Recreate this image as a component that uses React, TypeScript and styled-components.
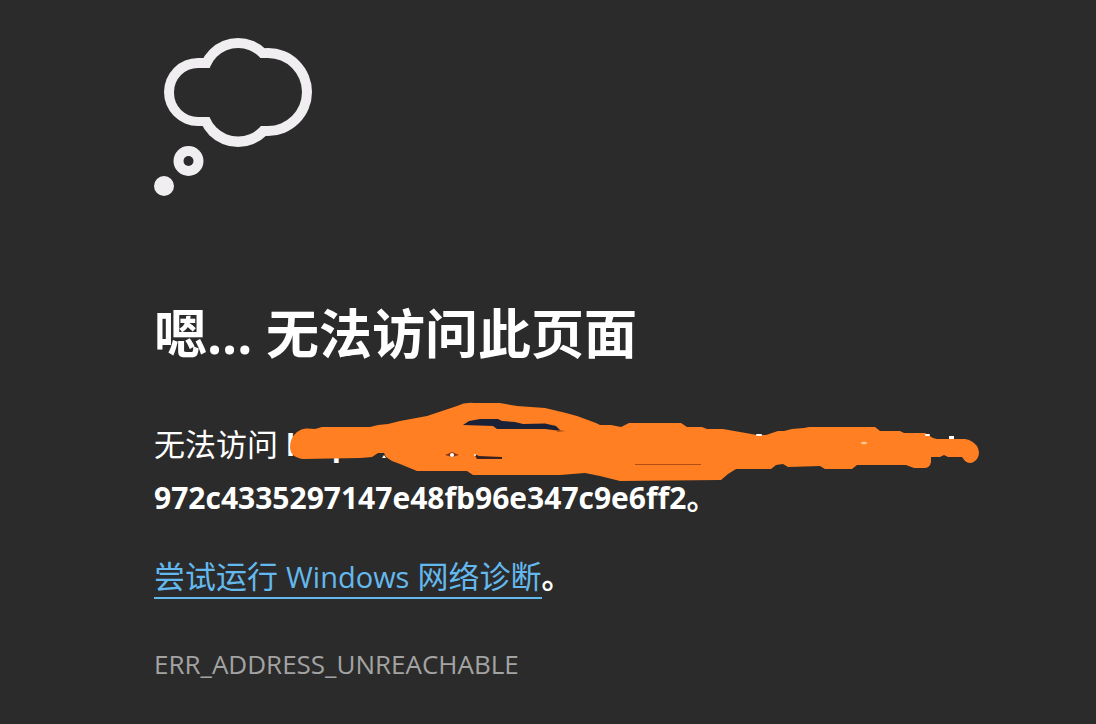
import React from "react";
import styled, { createGlobalStyle } from "styled-components";

const color = {
  page: "#2b2b2b",
  icon: "#f0eef0",
  text: "#ffffff",
  link: "#63b9ee",
  code: "#a3a3a3",
  marker: "#ff7f22",
  shade: "#1b2238",
};

const GlobalStyle = createGlobalStyle`
  html { background: ${color.page}; }
  body {
    margin: 0;
    background: ${color.page};
    color: ${color.text};
    font-family: "Open Sans", "Noto Sans CJK SC", sans-serif;
  }
`;

const Page = styled.main`
  box-sizing: border-box;
  padding: 38px 48px 40px 154px;
`;

const CloudIcon = styled.svg`
  display: block;
  width: 160px;
  height: 160px;
`;

const Title = styled.h1`
  margin: 96px 0 0;
  font-size: 53px;
  line-height: 80px;
  font-weight: 700;
`;

const Paragraph = styled.p`
  position: relative;
  margin: ${({ $gap }: { $gap: number }) => $gap}px 0 0;
  font-size: 31px;
  line-height: 52px;
`;

const Latin = styled.span`
  font-size: 29px;
`;

const Address = styled.strong`
  font-size: 30px;
  font-weight: 700;
`;

const Stop = styled.span`
  font-weight: 700;
`;

const DiagnosticsLink = styled.a`
  display: inline-block;
  line-height: 40px;
  color: ${color.link};
  text-decoration: none;
  border-bottom: 2px solid ${color.link};
`;

const ErrorCode = styled.div`
  margin-top: 44px;
  font-size: 26px;
  line-height: 36px;
  color: ${color.code};
`;

const Marker = styled.svg`
  position: absolute;
  left: 134px;
  top: -18px;
  width: 692px;
  height: 84px;
`;

function ThoughtCloud() {
  return (
    <CloudIcon viewBox="154 38 160 160" aria-hidden="true">
      <g fill={color.icon}>
        <rect x="164" y="58" width="80" height="68" rx="34" />
        <circle cx="238" cy="78" r="40" />
        <circle cx="238" cy="106.5" r="40.5" />
        <circle cx="268" cy="92" r="44" />
        <circle cx="188.5" cy="161" r="15" />
        <circle cx="164" cy="186" r="10" />
      </g>
      <g fill={color.page}>
        <rect x="174" y="68" width="80" height="49" rx="24" />
        <circle cx="238" cy="78" r="30" />
        <circle cx="238" cy="106" r="30.5" />
        <path d="M260 58H268A34 34 0 0 1 268 126H255Z" />
        <rect x="220" y="70" width="60" height="44" />
        <circle cx="188.5" cy="161" r="5" />
      </g>
    </CloudIcon>
  );
}

function MarkerStroke() {
  return (
    <Marker viewBox="288 400 692 84" aria-hidden="true">
      <path
        fill={color.marker}
        d="M290 447Q290 438 297 432Q302 428 307 428.500L315 429L322 427H370L378 425L388 424L400 421L427 416L457 406Q465 402 474 403H500L517 406L545 408L566 413L577 416L596 423L600 425H611L621 427L629 423H681L687 427H702L707 429H723L740 432L757 435H766L778 431H784L792 429L804 428L809 427H875L880 431H900L904 433H925L933 438L937 439H965Q972 440 977 446Q981 453 977 459Q971 466 965 461L962 457H948L944 455L940 457H931V462Q930 468 924 468H914L906 465H857L852 469H825L820 466L788 467L783 464L776 465L771 469H736L728 474L721 480L620 481L612 479L600 476L585 473L560 475H473L467 471H417L400 464L392 461L386 457L384 453H378L372 457L360 458L303 459Q290 457 290 447Z"
      />
      <path
        fill={color.shade}
        d="M463 425L469 421L480 419H498L502 421L515 422L523 424L545 423.500L556 426L561 431L545 429L497 429L493 426Z"
      />
      <path fill="#3a2220" d="M474 454L479 456L502 457V459L477 459Z" />
      <path fill="#8a3514" d="M445 455L452 452L459 455L452 457Z" />
      <path fill="#b04f18" d="M635 464H701V465H635ZM557 430L566 431L557 432Z" />
      <g fill="#ffffff">
        <circle cx="452" cy="455" r="2" />
        <circle cx="475" cy="455" r="1" />
        <path d="M382 458L384 455L386 458Z" />
        <rect x="756" y="434" width="6" height="2" rx="1" />
        <rect x="925" y="434" width="5" height="2" rx="1" />
        <rect x="949" y="436" width="5" height="3" />
      </g>
      <ellipse cx="864" cy="443" rx="3" ry="1.200" fill="#ffc796" />
    </Marker>
  );
}

export default function App() {
  return (
    <>
      <GlobalStyle />
      <Page lang="zh-CN">
        <ThoughtCloud />
        <Title>嗯... 无法访问此页面</Title>
        <Paragraph $gap={44}>
          无法访问 <Address>http</Address>
          <br />
          <Address>972c4335297147e48fb96e347c9e6ff2</Address>
          <Stop>。</Stop>
          <MarkerStroke />
        </Paragraph>
        <Paragraph $gap={26}>
          <DiagnosticsLink href="#diagnostics">
            尝试运行 <Latin>Windows</Latin> 网络诊断
          </DiagnosticsLink>
          <Stop>。</Stop>
        </Paragraph>
        <ErrorCode>ERR_ADDRESS_UNREACHABLE</ErrorCode>
      </Page>
    </>
  );
}
